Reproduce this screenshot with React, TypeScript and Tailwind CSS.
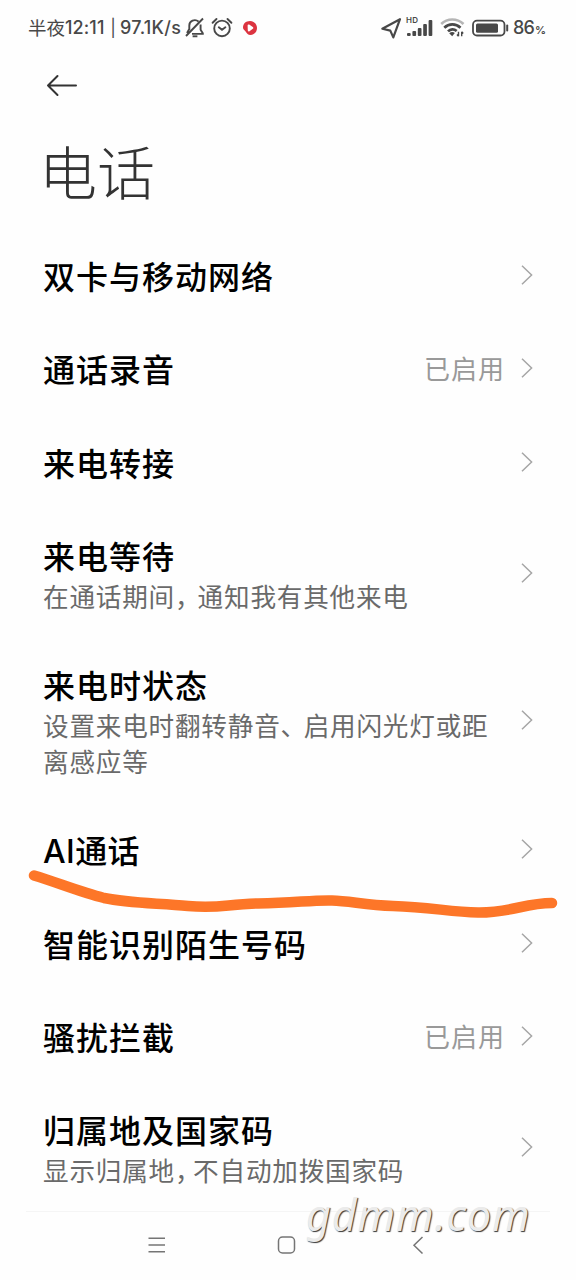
import React from "react";

type Item = {
  title: string;
  height: string;
  status?: string;
  lines?: string[];
  spacing?: string;
  punctuation?: string;
};

const items: Item[] = [
  { title: "双卡与移动网络", height: "h-[93px]" },
  { title: "通话录音", height: "h-[94px]", status: "已启用" },
  { title: "来电转接", height: "h-[93px]" },
  { title: "来电等待", height: "h-[129px]", lines: ["在通话期间，通知我有其他来电"], punctuation: "tracking-[-3px]" },
  { title: "来电时状态", height: "h-[165px]", lines: ["设置来电时翻转静音、启用闪光灯或距", "离感应等"], punctuation: "tracking-[-2.5px]" },
  { title: "AI通话", height: "h-[94px]", spacing: "tracking-[0.4px]" },
  { title: "智能识别陌生号码", height: "h-[93px]" },
  { title: "骚扰拦截", height: "h-[94px]", status: "已启用" },
  { title: "归属地及国家码", height: "h-[128px]", lines: ["显示归属地，不自动加拨国家码"], punctuation: "tracking-[-7.5px]" },
];

function Punctuated({ text, spacing }: { text: string; spacing?: string }) {
  return (
    <>
      {text.split(/([，、])/).map((part, i) =>
        part === "，" || part === "、" ? (
          <span key={i} className={spacing}>{part}</span>
        ) : (
          <span key={i}>{part}</span>
        ),
      )}
    </>
  );
}

function Chevron() {
  return (
    <svg className="h-5 w-3 shrink-0" viewBox="0 0 12 20" fill="none" stroke="#a6a6a6" strokeWidth="1.5">
      <path d="M1 0.7 10.6 10 1 19.3" />
    </svg>
  );
}

function Row({ item }: { item: Item }) {
  return (
    <li className={`flex items-center justify-between pr-[43px] pl-[43px] ${item.height}`}>
      <div className="min-w-0">
        <div className={`mt-[5px] flex h-[41px] items-center font-['Inter','Noto_Sans_CJK_SC',sans-serif] text-[32px] leading-[41px] font-medium whitespace-nowrap text-black ${item.spacing ?? "tracking-[1px]"}`}>
          {item.title}
        </div>
        {item.lines?.map((line) => (
          <div key={line} className="h-9 text-[25.6px] leading-9 tracking-[0.8px] whitespace-nowrap text-[#6a6a6a]">
            <Punctuated text={line} spacing={item.punctuation} />
          </div>
        ))}
      </div>
      <div className="flex shrink-0 items-center gap-4">
        {item.status && (
          <span className="-mt-px text-[26px] leading-9 tracking-[1px] text-[#999]">{item.status}</span>
        )}
        <Chevron />
      </div>
    </li>
  );
}

function StatusBar() {
  return (
    <header className="flex h-[56px] items-center pl-[28px] font-['Inter','Noto_Sans_CJK_SC',sans-serif] text-[#484848]">
      <span className="flex w-[155px] items-center leading-none whitespace-nowrap">
        <span className="text-[18.5px]">半夜</span>
        <span className="w-[41px] text-[18px] font-medium tracking-[0.1px]">12:11</span>
        <span className="w-[14px] text-center text-[17px]">|</span>
        <span className="text-[18px] font-medium tracking-[0.3px]">97.1K/s</span>
      </span>
      <svg className="ml-[2px] h-6 w-5" viewBox="0 0 20 24" fill="none" stroke="#484848" strokeWidth="1.9">
        <path d="M1 20 18 2.500M4.300 14V9.500c0-4.500 5.500-7 9.200-4M15.600 8.500v5.200l2.200 3.500v.7H7M4.300 13 2 17" />
        <path d="M7.600 20.300h4.800" />
      </svg>
      <svg className="ml-[6px] h-6 w-[22px]" viewBox="0 0 22 24" fill="none" stroke="#484848" strokeWidth="1.9" strokeLinecap="round">
        <circle cx="11" cy="12.400" r="7.800" />
        <path d="m7.800 11.300 3.200 2.500 3.400-2.500M1.600 6.800 5.500 3M20.400 6.800 16.500 3" />
      </svg>
      <svg className="ml-[9px] h-6 w-4" viewBox="0 0 16 24">
        <path d="M8 5C3.800 5 1 7.800 1 11.500c0 2.300 1.800 2.500 2.800 4.200C5 17.500 6 19 8.300 19c4 0 6.700-3.200 6.700-7S12 5 8 5Z" fill="#dc3440" />
        <path d="M5.600 9.400c0-.9.800-1.300 1.600-.8l3.600 2.400c.7.500.7 1.300 0 1.800l-3.300 2.400c-.8.500-1.600.1-1.700-.8Z" fill="white" />
      </svg>
      <svg className="ml-[122px] h-6 w-[22px]" viewBox="0 0 22 24" fill="none" stroke="#484848" strokeWidth="2.200" strokeLinejoin="round">
        <path d="M20 3.200 2.300 12.800l8 1.800 3 6.800L20 3.200Z" />
      </svg>
      <span className="relative ml-[4px] block h-6 w-[27px]">
        <span className="absolute top-0 left-0 text-[8px] leading-[9px] font-semibold tracking-[0.3px]">HD</span>
        <svg className="h-6 w-[27px]" viewBox="0 0 27 24" fill="#484848">
          <rect x="1" y="17" width="3.700" height="3" rx="1" />
          <rect x="6.400" y="15" width="3.700" height="5" rx="1" />
          <rect x="11.800" y="12" width="3.700" height="8" rx="1" />
          <rect x="17.200" y="8" width="3.700" height="12" rx="1" />
          <rect x="22.600" y="4" width="3.700" height="16" rx="1" />
        </svg>
      </span>
      <svg className="ml-[7px] h-6 w-[25px]" viewBox="0 0 25 24" fill="none" strokeWidth="2.700">
        <path d="M1.200 8C7.500 2 17 2 23.500 8" stroke="#b5b5b5" />
        <path d="M4.300 11.800c4.600-4.500 11.500-4.500 16.200 0M8 15.400c2.500-2.500 6-2.600 8.700-.4" stroke="#484848" />
        <path d="m12.200 20.200-3-3c1.700-1.500 4-1.600 5.600-.3Z" fill="#484848" />
        <path d="M18.500 15.800v4.400m-1.500-1.700 1.500 1.700M21.700 20.200v-4.400m1.500 1.700-1.500-1.700" stroke="#484848" strokeWidth="1.400" />
      </svg>
      <svg className="ml-[7px] h-6 w-[37px]" viewBox="0 0 37 24">
        <rect x="1" y="4.700" width="31.500" height="14.800" rx="4" fill="none" stroke="#484848" strokeWidth="1.800" />
        <rect x="4" y="7.500" width="22" height="9.200" rx="1.500" fill="#484848" />
        <path d="M35.200 9.500v5" stroke="#484848" strokeWidth="2" strokeLinecap="round" />
      </svg>
      <span className="ml-[4px] w-[22px] text-[18px] leading-none font-medium tracking-[-0.8px]">86</span>
      <span className="mt-[5px] text-[11px] leading-none font-semibold">%</span>
    </header>
  );
}

export default function App() {
  return (
    <main className="relative flex h-[1280px] w-[576px] flex-col overflow-hidden bg-[#fefefe] font-['Noto_Sans_CJK_SC',sans-serif]">
      <StatusBar />
      <div className="flex h-[60px] items-center pl-[46px]">
        <svg className="h-6 w-8" viewBox="0 0 32 24" fill="none" stroke="#333" strokeWidth="2" strokeLinecap="round" strokeLinejoin="round">
          <path d="M30 11.500H2M11.500 2 2 11.500l9.500 9.500" />
        </svg>
      </div>
      <h1 className="flex h-[112px] items-center pl-[39px] text-[58px] leading-[112px] font-light text-[#333]">
        <span className="-mt-[5px]">电话</span>
      </h1>
      <ul className="flex flex-col">
        {items.map((item) => (
          <Row key={item.title} item={item} />
        ))}
      </ul>
      <nav className="mx-[26px] h-[69px] border-t border-[#f5f5f5] pt-[23px]">
        <svg className="h-5 w-full" viewBox="0 0 524 20" fill="none" stroke="#757575" strokeWidth="1.500">
          <path d="M122.500 3.300h16.500M122.500 10h16.500M122.500 16.700h16.500" />
          <rect x="252.500" y="2" width="16" height="16" rx="4" />
          <path d="m396.500 2-8.500 8.300 8.500 8.200" />
        </svg>
      </nav>
      <svg className="pointer-events-none absolute top-[860px] left-0 h-[70px] w-[576px]" viewBox="0 860 576 70" fill="none">
        <path d="M34 875.500C56 882 80 892 104 898C130 903.500 160 903 188 906C220 909 226 904 258 903.500C296 903 310 900 332 900.500C350 901 365 905 393 906C430 907 450 912 478 912.500C510 913 525 903 552 903" stroke="#fd7628" strokeWidth="10.500" strokeLinecap="round" strokeLinejoin="round" />
      </svg>
      <div className="absolute top-[1187px] left-[306px] font-['Noto_Sans',sans-serif] text-[43px] leading-[56px] tracking-[0.9px] whitespace-nowrap text-[#ebebeb] italic antialiased opacity-[0.99] [text-shadow:1px_1px_1px_#333]">
        gdmm.com
      </div>
    </main>
  );
}
